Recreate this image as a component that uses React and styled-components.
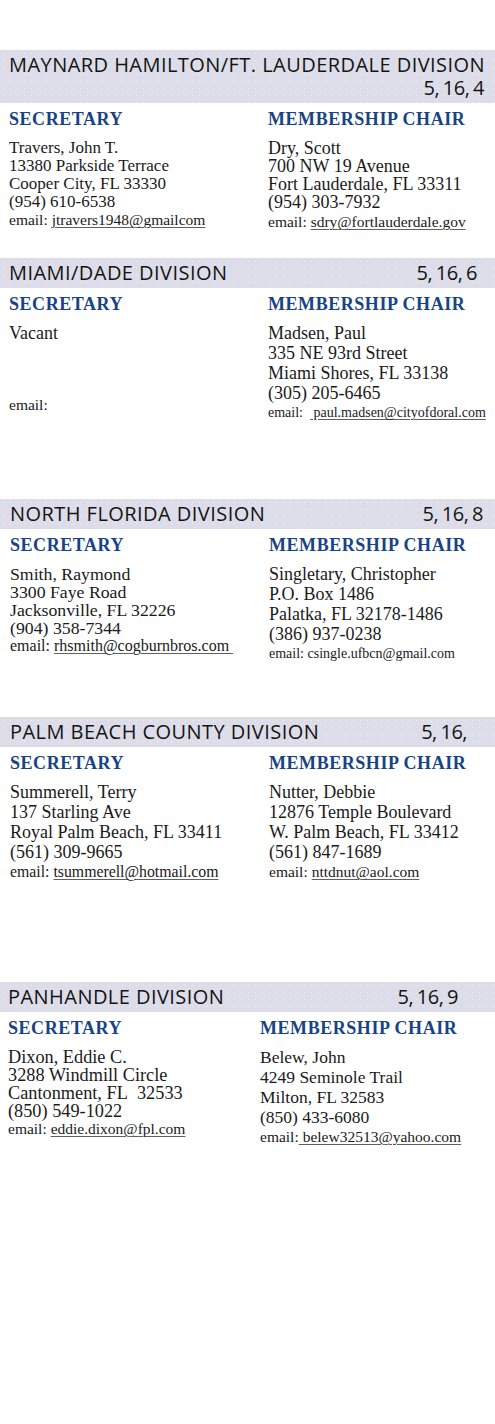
import React from "react";
import styled, { createGlobalStyle } from "styled-components";

const Global = createGlobalStyle`
  html, body { margin: 0; padding: 0; background: #ffffff; }
  body { font-family: "Liberation Serif", "Times New Roman", serif; color: #1a1a1a; }
`;

const Page = styled.div`
  width: 495px;
  padding-top: 50px;
  padding-bottom: 40px;
`;

const Section = styled.section`
  margin-top: ${(p) => p.$gap}px;
`;

const Band = styled.header`
  display: flex;
  flex-wrap: wrap;
  justify-content: space-between;
  align-items: baseline;
  padding: 3px ${(p) => p.$right}px 4px ${(p) => p.$left}px;
  background-color: #dcdde9;
  background-image: radial-gradient(circle, rgba(255, 255, 255, 0.55) 0.6px, transparent 0.9px);
  background-size: 7px 7px;
  font-family: "Open Sans", "Liberation Sans", sans-serif;
  font-weight: 400;
  font-size: 20px;
  line-height: 23px;
  letter-spacing: 0.45px;
  color: #141414;
`;

const Title = styled.span`
  white-space: nowrap;
`;

const Num = styled.span`
  margin-left: auto;
  white-space: nowrap;
  letter-spacing: -0.5px;
  word-spacing: -1px;
`;

const Columns = styled.div`
  display: grid;
  grid-template-columns: ${(p) => p.$split}px 1fr;
  padding-left: ${(p) => p.$left}px;
`;

const Column = styled.div`
  display: flex;
  flex-direction: column;
`;

const Role = styled.h3`
  margin: 6px 0 0;
  font-family: "Liberation Serif", "Times New Roman", serif;
  font-weight: 700;
  font-size: 18px;
  line-height: 20px;
  letter-spacing: 0.55px;
  color: #184386;
`;

const Lines = styled.div`
  margin-top: ${(p) => 19.26 - p.$lh / 2}px;
  font-size: ${(p) => p.$fs}px;
  line-height: ${(p) => p.$lh}px;
  white-space: nowrap;
`;

const Line = styled.div`
  min-height: ${(p) => p.$lh}px;
`;

const EmailLine = styled.div`
  font-size: ${(p) => p.$size}px;
  margin-top: ${(p) => p.$extra}px;
  white-space: pre;
`;

const Mail = styled.span`
  text-decoration: ${(p) => (p.$plain ? "none" : "underline")};
  text-decoration-color: #606060;
  text-decoration-thickness: 1px;
  text-underline-offset: 2px;
  white-space: pre;
`;

function Person({ lh, fs = 18, lines, blank = 0, email, emailSize = 15.5, emailPlain, emailExtra = 0, lead = "email: " }) {
  return (
    <Lines $lh={lh} $fs={fs}>
      {lines.map((l, i) => (
        <Line key={i} $lh={lh}>{l}</Line>
      ))}
      {Array.from({ length: blank }).map((_, i) => (
        <Line key={"b" + i} $lh={lh} />
      ))}
      <EmailLine $extra={emailExtra} $size={emailSize}>
        {email ? lead : "email:"}
        {email && <Mail $plain={emailPlain}>{email}</Mail>}
      </EmailLine>
    </Lines>
  );
}

const data = [
  {
    gap: 0,
    title: "MAYNARD HAMILTON/FT. LAUDERDALE DIVISION",
    num: "5, 16, 4",
    left: 9,
    numRight: 11,
    split: 259,
    sec: {
      lh: 18,
      fs: 17,
      lines: ["Travers, John T.", "13380 Parkside Terrace", "Cooper City, FL 33330", "(954) 610-6538"],
      email: "jtravers1948@gmailcom",
    },
    mem: {
      lh: 18,
      fs: 18,
      emailExtra: 2,
      lines: ["Dry, Scott", "700 NW 19 Avenue", "Fort Lauderdale, FL 33311", "(954) 303-7932"],
      email: "sdry@fortlauderdale.gov",
    },
  },
  {
    gap: 26.7,
    title: "MIAMI/DADE DIVISION",
    num: "5, 16, 6",
    left: 9,
    numRight: 18,
    split: 259,
    sec: { lh: 18, fs: 18, lines: ["Vacant"], blank: 3, email: "" },
    mem: {
      lh: 20,
      fs: 18,
      emailSize: 14,
      lead: "email:  ",
      lines: ["Madsen, Paul", "335 NE 93rd Street", "Miami Shores, FL 33138", "(305) 205-6465"],
      email: " paul.madsen@cityofdoral.com",
    },
  },
  {
    gap: 75.7,
    title: "NORTH FLORIDA DIVISION",
    num: "5, 16, 8",
    left: 10,
    numRight: 12,
    split: 259,
    sec: {
      lh: 18,
      fs: 17.75,
      emailSize: 16,
      lines: ["Smith, Raymond", "3300 Faye Road", "Jacksonville, FL 32226", "(904) 358-7344"],
      email: "rhsmith@cogburnbros.com ",
    },
    mem: {
      lh: 20,
      fs: 18,
      emailSize: 14,
      lines: ["Singletary, Christopher", "P.O. Box 1486", "Palatka, FL 32178-1486", "(386) 937-0238"],
      email: "csingle.ufbcn@gmail.com",
      emailPlain: true,
    },
  },
  {
    gap: 52.7,
    title: "PALM BEACH COUNTY DIVISION",
    num: "5, 16,",
    left: 10,
    numRight: 28,
    split: 259,
    sec: {
      lh: 20,
      fs: 18,
      emailSize: 15.8,
      lines: ["Summerell, Terry", "137 Starling Ave", "Royal Palm Beach, FL 33411", "(561) 309-9665"],
      email: "tsummerell@hotmail.com",
    },
    mem: {
      lh: 20,
      fs: 18,
      lines: ["Nutter, Debbie", "12876 Temple Boulevard", "W. Palm Beach, FL 33412", "(561) 847-1689"],
      email: "nttdnut@aol.com",
    },
  },
  {
    gap: 99.7,
    title: "PANHANDLE DIVISION",
    num: "5, 16, 9",
    left: 8,
    numRight: 37,
    split: 252,
    sec: {
      lh: 18,
      fs: 18.3,
      lines: ["Dixon, Eddie C.", "3288 Windmill Circle", "Cantonment, FL\u00a0 32533", "(850) 549-1022"],
      email: "eddie.dixon@fpl.com",
    },
    mem: {
      lh: 20,
      fs: 17.5,
      lead: "email:",
      lines: ["Belew, John", "4249 Seminole Trail", "Milton, FL 32583", "(850) 433-6080"],
      email: " belew32513@yahoo.com",
    },
  },
];

export default function App() {
  return (
    <>
      <Global />
      <Page>
        {data.map((d) => (
          <Section key={d.title} $gap={d.gap}>
            <Band $left={d.left} $right={d.numRight}>
              <Title>{d.title}</Title>
              <Num>{d.num}</Num>
            </Band>
            <Columns $left={d.left} $split={d.split}>
              <Column>
                <Role>SECRETARY</Role>
                <Person {...d.sec} />
              </Column>
              <Column>
                <Role>MEMBERSHIP CHAIR</Role>
                <Person {...d.mem} />
              </Column>
            </Columns>
          </Section>
        ))}
      </Page>
    </>
  );
}
